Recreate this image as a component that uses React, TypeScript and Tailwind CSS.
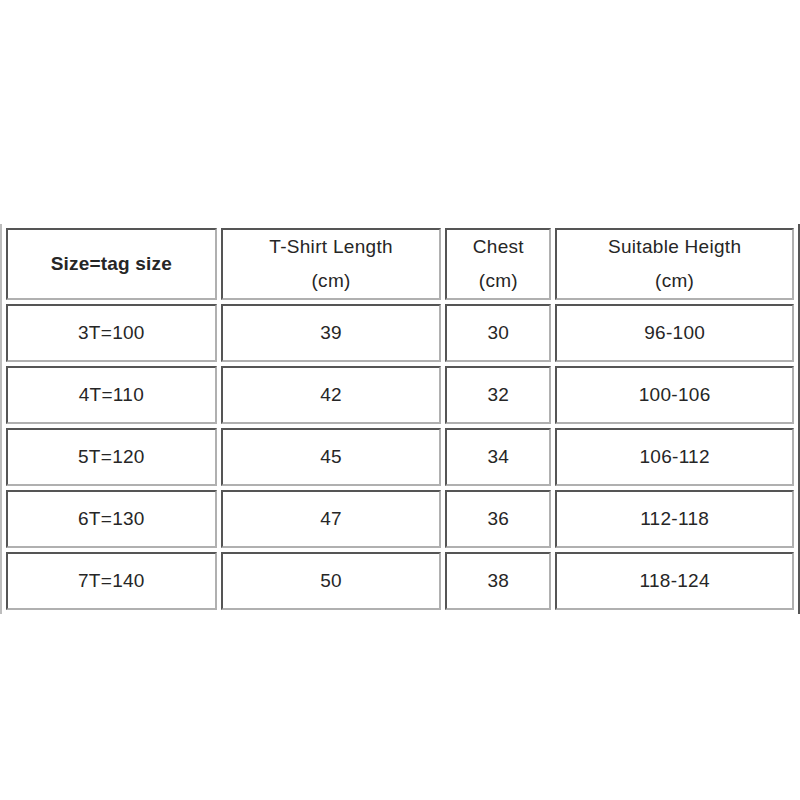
import React from 'react';

const rows = [
  ['3T=100', '39', '30', '96-100'],
  ['4T=110', '42', '32', '100-106'],
  ['5T=120', '45', '34', '106-112'],
  ['6T=130', '47', '36', '112-118'],
  ['7T=140', '50', '38', '118-124'],
];

const cell =
  'border-2 border-t-[#555] border-l-[#555] border-b-[#b0b0b0] border-r-[#b0b0b0] text-center align-middle p-0';

export default function App() {
  return (
    <div
      className="w-[800px] h-[800px] bg-white overflow-hidden text-[#262626] text-[19px]"
      style={{ fontFamily: '"Liberation Sans", Arial, sans-serif' }}
    >
      <table className="mt-[224px] table-fixed border-separate border-spacing-[4px] border-l-2 border-r-2 border-l-[#bdbdbd] border-r-[#555]">
        <colgroup>
          <col className="w-[211px]" />
          <col className="w-[221px]" />
          <col className="w-[106px]" />
          <col className="w-[239px]" />
        </colgroup>
        <thead>
          <tr className="h-[71px]">
            <th className={`${cell} font-bold tracking-[0.2px]`}>Size=tag size</th>
            <th className={`${cell} font-normal leading-[34px] tracking-[0.3px]`}>
              T-Shirt Length
              <br />
              (cm)
            </th>
            <th className={`${cell} font-normal leading-[34px] tracking-[0.3px]`}>
              Chest
              <br />
              (cm)
            </th>
            <th className={`${cell} font-normal leading-[34px] tracking-[0.3px]`}>
              Suitable Heigth
              <br />
              (cm)
            </th>
          </tr>
        </thead>
        <tbody>
          {rows.map((r) => (
            <tr key={r[0]} className="h-[58px]">
              {r.map((v, i) => (
                <td key={i} className={`${cell} tracking-[0.3px]`}>
                  {v}
                </td>
              ))}
            </tr>
          ))}
        </tbody>
      </table>
    </div>
  );
}
